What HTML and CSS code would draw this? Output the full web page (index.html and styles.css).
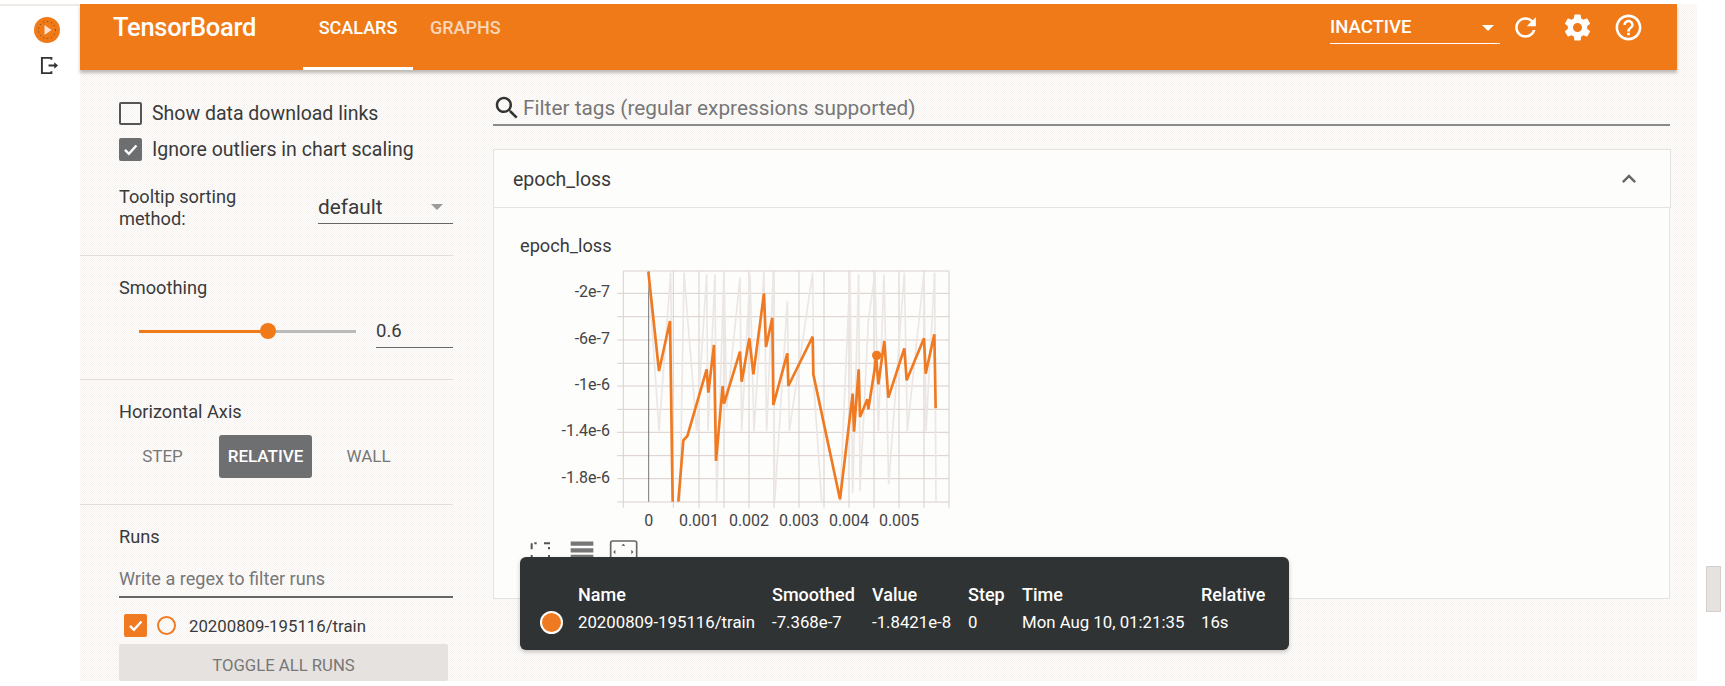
FILE: index.html
```html
<!DOCTYPE html>
<html lang="en">
<head>
<meta charset="utf-8">
<title>TensorBoard</title>
<link rel="stylesheet" href="styles.css">
</head>
<body>
<nav class="rail">
  <svg class="rail-play" viewBox="0 0 26 26" width="26" height="26"><circle cx="13" cy="13" r="13" fill="#ef7a17"/><circle cx="13" cy="13" r="8.5" fill="none" stroke="#5a3b20" stroke-width="1" stroke-dasharray="1 3"/><path d="M10.5 8v10l7-5z" fill="#fbe3cf"/></svg>
  <svg class="rail-exit" viewBox="0 0 20 20" width="19" height="19"><path d="M12 4V2H2v16h10v-2M9 10h7" fill="none" stroke="#333" stroke-width="2"/><path d="M15 6.500l4 3.500-4 3.500z" fill="#333"/></svg>
</nav>
<div class="app">
  <header class="topbar">
    <div class="brand">TensorBoard</div>
    <div class="tab tab-active">SCALARS</div>
    <div class="tab tab-dim">GRAPHS</div>
    <div class="status">
      <span>INACTIVE</span>
      <i class="caret caret-white"></i>
    </div>
    <svg class="top-icon refresh" viewBox="0 0 24 24"><path d="M17.65 6.35C16.2 4.9 14.21 4 12 4c-4.420 0-7.990 3.580-7.990 8s3.570 8 7.990 8c3.730 0 6.840-2.550 7.730-6h-2.080c-.82 2.330-3.040 4-5.650 4-3.310 0-6-2.690-6-6s2.690-6 6-6c1.660 0 3.140.69 4.220 1.780L13 11h7V4l-2.350 2.350z"/></svg>
    <svg class="top-icon gear" viewBox="0 0 24 24"><path d="M19.43 12.98c.04-.32.07-.64.07-.98s-.03-.66-.07-.98l2.110-1.650c.19-.15.24-.42.12-.64l-2-3.460c-.12-.22-.39-.3-.61-.22l-2.490 1c-.52-.4-1.080-.73-1.690-.98l-.38-2.650C14.460 2.180 14.250 2 14 2h-4c-.25 0-.46.18-.49.42l-.38 2.650c-.61.25-1.170.59-1.690.98l-2.490-1c-.23-.09-.49 0-.61.22l-2 3.460c-.13.22-.07.49.12.64l2.110 1.650c-.04.32-.07.65-.07.98s.03.66.07.98l-2.110 1.650c-.19.15-.24.42-.12.64l2 3.460c.12.22.39.3.61.22l2.490-1c.52.4 1.080.73 1.690.98l.38 2.650c.03.24.24.42.49.42h4c.25 0 .46-.18.49-.42l.38-2.650c.61-.25 1.170-.59 1.690-.98l2.490 1c.23.09.49 0 .61-.22l2-3.460c.12-.22.07-.49-.12-.64l-2.110-1.650zM12 15.500c-1.930 0-3.500-1.570-3.500-3.500s1.570-3.500 3.500-3.500 3.500 1.570 3.500 3.500-1.570 3.500-3.500 3.500z"/></svg>
    <svg class="top-icon help" viewBox="0 0 24 24"><path d="M11 18h2v-2h-2v2zm1-16C6.480 2 2 6.480 2 12s4.480 10 10 10 10-4.480 10-10S17.520 2 12 2zm0 18c-4.410 0-8-3.590-8-8s3.590-8 8-8 8 3.590 8 8-3.590 8-8 8zm0-14c-2.210 0-4 1.790-4 4h2c0-1.100.9-2 2-2s2 .9 2 2c0 2-3 1.750-3 5h2c0-2.250 3-2.500 3-5 0-2.210-1.790-4-4-4z"/></svg>
  </header>
  <div class="main">
    <aside class="sidebar">
      <section class="sec sec-options">
        <label class="check-row"><span class="box"></span>Show data download links</label>
        <label class="check-row"><span class="box box-on"><svg viewBox="0 0 24 24"><path d="M5 12.500l5 5L19.500 7" fill="none" stroke="#fff" stroke-width="3"/></svg></span>Ignore outliers in chart scaling</label>
        <div class="sort-row">
          <div class="sort-label">Tooltip sorting<br>method:</div>
          <div class="sort-select"><span>default</span><i class="caret caret-gray"></i></div>
        </div>
      </section>
      <section class="sec sec-smooth">
        <div class="sec-title">Smoothing</div>
        <div class="slider-row">
          <div class="slider"><div class="slider-fill"></div><div class="slider-knob"></div></div>
          <div class="slider-value">0.6</div>
        </div>
      </section>
      <section class="sec sec-axis">
        <div class="sec-title">Horizontal Axis</div>
        <div class="axis-row">
          <div class="axis-btn axis-step">STEP</div>
          <div class="axis-btn axis-rel">RELATIVE</div>
          <div class="axis-btn axis-wall">WALL</div>
        </div>
      </section>
      <section class="sec sec-runs">
        <div class="sec-title">Runs</div>
        <div class="regex">Write a regex to filter runs</div>
        <div class="run-row">
          <span class="box box-run"><svg viewBox="0 0 24 24"><path d="M5 12.500l5 5L19.500 7" fill="none" stroke="#fff" stroke-width="3"/></svg></span>
          <span class="run-radio"></span>
          <span class="run-name">20200809-195116/train</span>
        </div>
        <div class="toggle">TOGGLE ALL RUNS</div>
      </section>
    </aside>
    <div class="content">
      <div class="search">
        <svg viewBox="0 0 24 24" width="30" height="30"><path fill="#333" d="M15.500 14h-.79l-.28-.27C15.410 12.590 16 11.110 16 9.500 16 5.910 13.090 3 9.500 3S3 5.910 3 9.500 5.910 16 9.500 16c1.610 0 3.090-.59 4.230-1.570l.27.28v.79l5 4.990L20.490 19l-4.990-5zm-6 0C7.010 14 5 11.990 5 9.500S7.010 5 9.500 5 14 7.010 14 9.500 11.990 14 9.500 14z"/></svg>
        <span>Filter tags (regular expressions supported)</span>
      </div>
      <div class="card-head">
        <span>epoch_loss</span>
        <svg viewBox="0 0 24 24" width="28" height="28"><path fill="#666" d="M7.410 15.410L12 10.830l4.590 4.580L18 14l-6-6-6 6z"/></svg>
      </div>
      <div class="card-body">
        <div class="chart-title">epoch_loss</div>
        <svg class="chart" viewBox="0 126 1380 894" width="460" height="298">
          <g class="grid">
            <path d="M370 150H1347M352 217H1347M352 287H1347M352 357H1347M352 427H1347M352 495H1347M352 565H1347M352 634H1347M352 704H1347M352 773H1347M352 843H1347"/>
            <path d="M370 150V860M520 150V860M597 150V860M672 150V860M747 150V860M822 150V860M897 150V860M972 150V860M1047 150V860M1122 150V860M1197 150V860M1272 150V860M1347 150V860"/>
          </g>
          <path class="zero" d="M446 150V842"/>
          <path class="raw" d="M445 152L477 630L512 155L520 842M540 842L552 155L590 630L620 160L624 630L645 160L650 842L672 150L680 560L720 170L725 630L750 160L762 630L792 152L800 630L820 152L824 842L862 240L868 630L938 155L942 500L965 842M1020 842L1050 155L1058 815L1076 160L1080 810L1105 300L1125 155L1135 630L1152 160L1166 790L1213 155L1222 630L1272 155L1278 630L1304 155L1308 842"/>
          <polyline class="smooth" points="445,152 477,450 510,300 518,842"/>
          <polyline class="smooth" points="535,842 550,658 562,645 620,445 625,515 642,372 648,720 668,495 672,548 720,392 725,482 748,352 760,460 792,217 798,378 817,290 820,552 862,397 865,495 938,347 940,460 1020,835 1058,518 1062,632 1076,445 1080,588 1102,535 1105,565 1124,445 1128,400 1135,490 1153,360 1165,530 1213,382 1220,478 1272,352 1277,458 1303,340 1307,562"/>
          <circle cx="1130" cy="403" r="14" fill="#ef7a22"/>
          <g class="y-labels">
            <text x="330" y="229">-2e-7</text>
            <text x="330" y="369">-6e-7</text>
            <text x="330" y="508">-1e-6</text>
            <text x="330" y="646">-1.4e-6</text>
            <text x="330" y="785">-1.8e-6</text>
          </g>
          <g class="x-labels">
            <text x="446" y="916">0</text>
            <text x="597" y="916">0.001</text>
            <text x="747" y="916">0.002</text>
            <text x="897" y="916">0.003</text>
            <text x="1047" y="916">0.004</text>
            <text x="1197" y="916">0.005</text>
          </g>
          <path class="tool-dark" d="M95 985V967H110M132 967H147V985M95 1002V1018M147 1002V1018"/>
          <path class="tool-gray" d="M212 968H280M212 988H280M212 1008H280"/>
          <rect class="tool-box" x="332" y="960" width="78" height="70" rx="6"/>
          <path d="M370 968l-6 6h12zM346 986v14l-6-7zM394 986v14l6-7z" fill="#555"/>
        </svg>
        <div class="tooltip">
          <table>
            <thead>
              <tr><th class="col-dot"></th><th class="col-name">Name</th><th class="col-smooth">Smoothed</th><th class="col-value">Value</th><th class="col-step">Step</th><th class="col-time">Time</th><th>Relative</th></tr>
            </thead>
            <tbody>
              <tr><td><span class="tip-dot"></span></td><td>20200809-195116/train</td><td>-7.368e-7</td><td>-1.8421e-8</td><td>0</td><td>Mon Aug 10, 01:21:35</td><td>16s</td></tr>
            </tbody>
          </table>
        </div>
      </div>
    </div>
  </div>
</div>
<div class="scrolltrack"><div class="scrollthumb"></div></div>
</body>
</html>
```
FILE: styles.css
```css
* { box-sizing: border-box; }
html, body { margin: 0; padding: 0; }
body {
  width: 1725px;
  height: 686px;
  overflow: hidden;
  display: flex;
  background: #fff;
  font-family: Roboto, "Liberation Sans", sans-serif;
  color: #3a3a3a;
}
.rail {
  width: 80px;
  height: 100px;
  flex: none;
  margin-top: 4px;
  border-top: 2px solid #eeeae8;
  display: flex;
  flex-direction: column;
  align-items: center;
  padding: 11px 0 0 14px;
  gap: 13px;
}
.rail svg { display: block; }
.rail-exit { margin-left: 4px; }
.app {
  width: 1617px;
  height: 677px;
  margin-top: 4px;
  flex: none;
  background: repeating-conic-gradient(#fefdfc 0 25%, #f6f3f1 0 50%) 0 0 / 2px 2px;
  display: flex;
  flex-direction: column;
}
.topbar {
  width: 1597px;
  height: 66px;
  flex: none;
  background: #ef7a17;
  box-shadow: 0 3px 3px rgba(120, 110, 105, .45);
  display: flex;
  align-items: flex-start;
  color: #fff;
}
.brand {
  width: 223px;
  padding: 9px 0 0 33px;
  font-size: 25.500px;
  line-height: 28px;
  font-weight: 500;
  letter-spacing: -.3px;
  white-space: nowrap;
}
.tab {
  height: 66px;
  width: 110px;
  padding-top: 13px;
  text-align: center;
  font-size: 18px;
  line-height: 21px;
  font-weight: 500;
}
.tab-active { border-bottom: 3px solid #fff; }
.tab-dim { color: #f9d6b8; margin-left: 7px; width: 86px; text-align: left; padding-left: 10px; }
.status {
  margin-left: 824px;
  width: 170px;
  height: 40px;
  padding-top: 13px;
  border-bottom: 1px solid #fff;
  display: flex;
  justify-content: space-between;
  font-size: 18.500px;
  line-height: 21px;
  font-weight: 500;
}
.caret { display: block; width: 0; height: 0; border-style: solid; border-width: 6px 6.500px 0; border-color: #fff transparent transparent; }
.caret-white { margin: 8px 6px 0 0; }
.caret-gray { border-top-color: #9a9a9a; }
.top-icon { width: 31px; height: 31px; fill: #fff; margin-top: 8px; flex: none; }
.refresh { margin-left: 10px; }
.gear { margin-left: 21px; }
.help { margin-left: 20px; }
.main { flex: 1; display: flex; min-height: 0; }
.sidebar { width: 373px; flex: none; display: flex; flex-direction: column; }
.sec { flex: none; padding-left: 39px; border-bottom: 1px solid #e4dfdc; font-size: 18.200px; }
.sec-title { line-height: 20px; }
.sec-options { height: 186px; padding-top: 32px; }
.check-row { display: flex; align-items: center; height: 23px; margin-bottom: 13px; font-size: 19.500px; }
.box { width: 23px; height: 23px; border: 2px solid #555; border-radius: 2px; margin-right: 10px; flex: none; display: block; }
.box svg { display: block; width: 100%; height: 100%; }
.box-on { background: #6d6e70; border-color: #6d6e70; }
.sort-row { display: flex; margin-top: 25px; }
.sort-label { width: 199px; line-height: 22px; }
.sort-select {
  width: 135px;
  height: 36px;
  margin-top: 2px;
  padding: 8px 10px 0 0;
  border-bottom: 1px solid #666;
  display: flex;
  justify-content: space-between;
  font-size: 20.800px;
  line-height: 22px;
}
.sort-select .caret { margin-top: 8px; }
.sec-smooth { height: 124px; padding-top: 22px; }
.slider-row { display: flex; margin-top: 23px; }
.slider { position: relative; width: 217px; height: 3px; margin: 9px 0 0 20px; background: #bdbbb9; }
.slider-fill { width: 129px; height: 3px; background: #ef7a17; }
.slider-knob { position: absolute; left: 121px; top: -7px; width: 16px; height: 16px; border-radius: 50%; background: #ef7a17; }
.slider-value { width: 77px; height: 27px; margin-left: 20px; border-bottom: 1px solid #666; font-size: 18.500px; line-height: 20px; }
.sec-axis { height: 125px; padding-top: 22px; }
.axis-row { display: flex; align-items: center; margin-top: 13px; font-size: 17px; font-weight: 500; color: #777; }
.axis-btn { height: 43px; line-height: 43px; text-align: center; }
.axis-step { width: 87px; margin-right: 13px; font-weight: 400; }
.axis-rel { width: 93px; background: #6d6f71; color: #fff; border-radius: 3px; }
.axis-wall { width: 113px; font-weight: 400; }
.sec-runs { height: 176px; padding-top: 22px; border-bottom: 0; }
.regex { width: 334px; height: 42px; margin-top: 9px; padding-top: 13px; border-bottom: 2px solid #666; line-height: 20px; color: #777; font-size: 18.100px; }
.run-row { display: flex; align-items: center; height: 23px; margin: 16px 0 7px 5px; }
.box-run { background: #ef7a22; border-color: #ef7a22; margin-right: 10px; }
.run-radio { width: 19px; height: 19px; border: 2px solid #ef7a22; border-radius: 50%; margin-right: 13px; flex: none; }
.run-name { font-size: 16.800px; }
.toggle { width: 329px; height: 37px; background: #e6e2df; border-radius: 2px; color: #777; font-size: 16.700px; text-align: center; line-height: 44px; }
.content { width: 1178px; margin-left: 40px; flex: none; padding-top: 15px; }
.search { height: 41px; padding-top: 7px; display: flex; align-items: center; border-bottom: 2px solid #8a8a8a; color: #777; font-size: 20.800px; margin-right: 1px; }
.search svg { margin: 0 0 0 -1px; }
.search span { margin-left: 1px; }
.card-head {
  height: 59px;
  margin-top: 23px;
  padding: 1px 27px 0 19px;
  background: #fdfdfc;
  border: 1px solid #e6e2df;
  display: flex;
  align-items: center;
  justify-content: space-between;
  font-size: 19.500px;
}
.card-body {
  position: relative;
  height: 391px;
  margin-right: 1px;
  background: #fdfdfc;
  border: 1px solid #e6e2df;
  border-top: 0;
}
.chart-title { padding: 28px 0 0 26px; font-size: 18.200px; line-height: 20px; height: 55px; }
.chart { display: block; margin-left: 6px; }
.grid path { fill: none; stroke: #d9cfca; stroke-width: 3; }
.zero { stroke: #777; stroke-width: 3; fill: none; }
.raw { fill: none; stroke: #ece7e4; stroke-width: 5; }
.smooth { fill: none; stroke: #ef7a22; stroke-width: 8; stroke-linejoin: miter; }
.y-labels text { text-anchor: end; font-size: 48px; fill: #444; }
.x-labels text { text-anchor: middle; font-size: 48px; fill: #444; }
.tool-dark { fill: none; stroke: #555; stroke-width: 6; stroke-dasharray: 18 8; }
.tool-gray { fill: none; stroke: #777; stroke-width: 13; }
.tool-box { fill: none; stroke: #666; stroke-width: 5; }
.tooltip {
  position: absolute;
  left: 26px;
  top: 349px;
  width: 769px;
  height: 93px;
  background: #303333;
  border-radius: 6px;
  box-shadow: 0 2px 4px rgba(120,110,105,.4);
  color: #fff;
  padding-top: 23px;
}
.tooltip table { width: 769px; table-layout: fixed; border-collapse: collapse; font-size: 16.800px; }
.tooltip th, .tooltip td { padding: 0; text-align: left; height: 28px; white-space: nowrap; }
.tooltip th { font-weight: 500; font-size: 18px; }
.col-dot { width: 58px; }
.col-name { width: 194px; }
.col-smooth { width: 100px; }
.col-value { width: 96px; }
.col-step { width: 54px; }
.col-time { width: 179px; }
.tip-dot { display: block; width: 23px; height: 23px; margin-left: 20px; border-radius: 50%; background: #ef7a22; border: 2px solid #fff; }
.scrolltrack { width: 28px; flex: none; padding: 566px 0 0 9px; }
.scrollthumb { width: 15px; height: 46px; background: #e6e2df; border: 1px solid #d5cfcb; }
```
